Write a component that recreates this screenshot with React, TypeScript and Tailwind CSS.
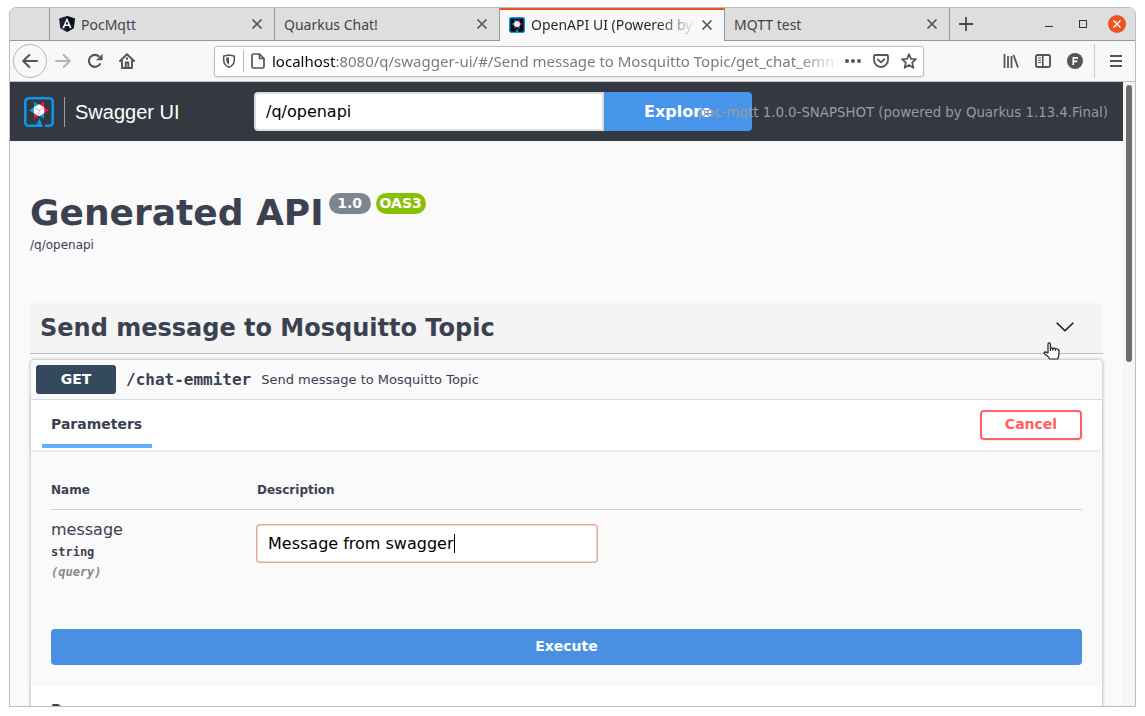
import React from "react";

const CloseX = ({ className = "" }: { className?: string }) => (
  <svg viewBox="0 0 12 12" className={`h-3 w-3 shrink-0 ${className}`} fill="none" stroke="#555" strokeWidth="1.7">
    <path d="M1.5 1.5 10.5 10.5M10.5 1.5 1.5 10.5" />
  </svg>
);

const AngularIcon = () => (
  <svg viewBox="0 0 16 16" className="h-4 w-4 shrink-0">
    <path d="M8 0 15.9 2.6 14.7 12.3 8 16 1.3 12.3.1 2.6Z" fill="#1b2230" />
    <path d="M8 0 15.9 2.6 14.7 12.3 8 16Z" fill="#0b0f18" />
    <path fillRule="evenodd" d="M8 1.8 12.7 12.3H10.9L10 9.9H6L5.1 12.3H3.3ZM8 5 6.6 8.4H9.4Z" fill="#fff" />
  </svg>
);

const QuarkusIcon = ({ dark, className }: { dark?: boolean; className: string }) => (
  <svg viewBox="0 0 30 30" className={`shrink-0 ${className}`}>
    {dark && <rect x="1" y="1" width="28" height="28" rx="3" fill="#050a12" />}
    <path
      d="M12 28.8H4.5A3.2 3.2 0 0 1 1.3 25.5V4.5A3.2 3.2 0 0 1 4.5 1.3H25.5A3.2 3.2 0 0 1 28.7 4.5V25.5A3.2 3.2 0 0 1 25.5 28.8H21"
      fill="none"
      stroke="#0b97ea"
      strokeWidth="2.6"
    />
    <path d="M15.4 21.2 19 30H11.5Z" fill="#0b97ea" />
    <path d="M10 4.8 15.2 8 10 11.2Z" fill="#0b97ea" />
    <path d="M20 4.8 14.8 8 20 11.2Z" fill="#f5134f" />
    <path d="M5 13.3 10.3 10V16.6Z" fill="#0b97ea" />
    <path d="M25 13.3 19.7 10V16.6Z" fill="#f5134f" />
    <path d="M10 21.8V15.4L15.2 18.6Z" fill="#f5134f" />
    <path d="M20 21.8V15.4L14.8 18.6Z" fill="#0b97ea" />
    <path d="M15 7.3 20.2 10.3V16.3L15 19.3 9.8 16.3V10.3Z" fill="#fff" />
    <path d="M10.3 10.7 15 13.3 19.7 10.7M15 13.3V18.6" fill="none" stroke="#9ba6b3" strokeWidth=".8" />
  </svg>
);

const Tab = ({ title, icon }: { title: string; icon?: React.ReactNode }) => (
  <div className="flex h-[33px] w-[225px] items-center border-r border-b border-[#999] bg-[#dedede] pr-[11px] pl-[9px]">
    {icon && <span className="mr-1.5 flex">{icon}</span>}
    <span className="flex-1 whitespace-nowrap">{title}</span>
    <CloseX />
  </div>
);

const TabBar = () => (
  <div className="flex h-[33px] text-[14px] text-[#444]">
    <div className="w-10 border-r border-b border-[#999] bg-[#dedede]" />
    <Tab title="PocMqtt" icon={<AngularIcon />} />
    <Tab title="Quarkus Chat!" />
    <div className="flex h-[33px] w-[225px] items-center border-t-2 border-r border-[#e95420] border-r-[#999] bg-[#f8f8f8] pr-[11px] pb-0.5 pl-[9px]">
      <QuarkusIcon dark className="mr-1.5 h-4 w-4" />
      <span className="w-[164px] overflow-hidden mask-r-from-78% whitespace-nowrap text-[#2a2a2a]">OpenAPI UI (Powered by</span>
      <CloseX className="ml-auto" />
    </div>
    <Tab title="MQTT test" />
    <div className="flex flex-1 items-center border-b border-[#999] bg-[#dedede] pr-[9px] pl-[9px]">
      <svg viewBox="0 0 14 14" className="h-3.5 w-3.5" stroke="#4a4a4a" strokeWidth="1.8">
        <path d="M7 0V14M0 7H14" />
      </svg>
      <div className="ml-auto flex items-center">
        <svg viewBox="0 0 8 12" className="mr-[26px] h-3 w-2" stroke="#333" strokeWidth="1">
          <path d="M0 8.5H8" />
        </svg>
        <svg viewBox="0 0 8 8" className="mr-[21px] h-2 w-2" fill="none" stroke="#333" strokeWidth="1">
          <rect x=".5" y=".5" width="7" height="7" />
        </svg>
        <svg viewBox="0 0 18 18" className="h-[18px] w-[18px]">
          <circle cx="9" cy="9" r="9" fill="#e95420" />
          <path d="M5.5 5.5 12.5 12.5M12.5 5.5 5.5 12.5" stroke="#fff" strokeWidth="1.4" />
        </svg>
      </div>
    </div>
  </div>
);

const icon = "h-4 w-4 shrink-0";

const Toolbar = () => (
  <div className="flex h-[41px] items-center border-b border-[#c4c4c4] bg-[#f8f8f8] pl-[3px] text-[#555]">
    <div className="flex h-[34px] w-[34px] items-center justify-center rounded-full border border-[#b4b4b4]">
      <svg viewBox="0 0 16 16" className={icon} fill="none" stroke="currentColor" strokeWidth="2" strokeLinecap="round" strokeLinejoin="round">
        <path d="M15 8H1.4M7.3 2 1.2 8 7.3 14" />
      </svg>
    </div>
    <svg viewBox="0 0 16 16" className={`ml-2 text-[#b5b5b5] ${icon}`} fill="none" stroke="currentColor" strokeWidth="2" strokeLinecap="round" strokeLinejoin="round">
      <path d="M1 8H14.6M8.7 2 14.8 8 8.7 14" />
    </svg>
    <svg viewBox="0 0 16 16" className={`ml-4 ${icon}`}>
      <path d="M13.4 10.3A6 6 0 1 1 12.3 3.8" fill="none" stroke="currentColor" strokeWidth="2.1" />
      <path d="M15.6.8V7.2H9.2Z" fill="currentColor" />
    </svg>
    <svg viewBox="0 0 16 16" className={`ml-4 ${icon}`} fill="none" stroke="currentColor" strokeWidth="1.9" strokeLinejoin="round" strokeLinecap="round">
      <path d="M1 8 8 1.2 15 8M3 7.5V15H13V7.5" />
      <path d="M6.7 15V9.5H9.3V15" />
      <path d="M8 5V6" />
    </svg>
    <div className="ml-[79px] flex h-[31px] w-[710px] items-center rounded-[3px] border border-[#bdbdbd] bg-white pl-[7px] shadow-[0_1px_2px_rgba(0,0,0,0.08)]">
      <svg viewBox="0 0 14 14" className="h-3.5 w-3.5 shrink-0">
        <path d="M7 .9 12.3 2V6C12.3 9.4 10.3 11.9 7 13.2 3.7 11.9 1.7 9.4 1.7 6V2Z" fill="none" stroke="currentColor" strokeWidth="1.5" />
        <path d="M7 3.2V10.7C5.2 9.8 4.2 8 4.2 6V3.8Z" fill="currentColor" />
      </svg>
      <span className="ml-[7px] h-[22px] w-px bg-[#bbb]" />
      <svg viewBox="0 0 14 16" className="ml-[7px] h-4 w-3.5 shrink-0" fill="none" stroke="currentColor" strokeWidth="1.7" strokeLinejoin="round">
        <path d="M1 2.5Q1 1 2.5 1H8.5L13 5.5V13.5Q13 15 11.5 15H2.5Q1 15 1 13.5ZM8.5 1V5.5H13" />
      </svg>
      <div className="ml-[7px] w-[567px] overflow-hidden mask-r-from-93% text-[15px] whitespace-nowrap text-[#7b7b7b]">
        <span className="text-[#080808]">localhost</span>:8080/q/swagger-ui/#/Send message to Mosquitto Topic/get_chat_emm
      </div>
      <svg viewBox="0 0 16 16" className={`ml-1.5 ${icon}`} fill="currentColor">
        <circle cx="2" cy="8" r="2" />
        <circle cx="8" cy="8" r="2" />
        <circle cx="14" cy="8" r="2" />
      </svg>
      <svg viewBox="0 0 16 14" className="ml-3 h-3.5 w-4 shrink-0" fill="none" stroke="currentColor" strokeWidth="1.8" strokeLinecap="round" strokeLinejoin="round">
        <path d="M2 1H14Q15 1 15 2V6A7 7 0 0 1 1 6V2Q1 1 2 1Z" />
        <path d="M4.8 5.3 8 8.4 11.2 5.3" />
      </svg>
      <svg viewBox="0 0 16 16" className={`ml-3 ${icon}`} fill="none" stroke="currentColor" strokeWidth="1.7" strokeLinejoin="round">
        <path d="M8 1.2 10 5.8 15 6.2 11.2 9.5 12.4 14.8 8 12 3.6 14.8 4.8 9.5 1 6.2 6 5.8Z" />
      </svg>
    </div>
    <svg viewBox="0 0 16 14" className="ml-[79px] h-3.5 w-4 shrink-0" fill="none" stroke="currentColor" strokeWidth="1.8">
      <path d="M1.5 0V14M5 2V14M8.5 2V14M10.5 1 15 13.5" />
    </svg>
    <svg viewBox="0 0 16 14" className="ml-4 h-3.5 w-4 shrink-0" fill="none" stroke="currentColor">
      <rect x="1" y="1" width="14" height="12" rx="1.5" strokeWidth="1.9" />
      <path d="M7.8 1V13" strokeWidth="1.6" />
      <path d="M3 4H6.2M3 6.3H6.2M3 8.6H6.2" strokeWidth="1" />
    </svg>
    <svg viewBox="0 0 16 16" className={`ml-4 ${icon}`}>
      <circle cx="8" cy="8" r="8" fill="currentColor" />
      <path d="M6.3 12V4.8H11M6.3 8.3H10.3" fill="none" stroke="#fff" strokeWidth="1.7" />
    </svg>
    <span className="ml-[11px] h-[34px] w-px bg-[#ccc]" />
    <svg viewBox="0 0 12 12" className="ml-[15px] h-3 w-3 shrink-0" stroke="currentColor" strokeWidth="2">
      <path d="M0 1H12M0 6H12M0 11H12" />
    </svg>
  </div>
);

const Header = () => (
  <div className="relative flex h-[59px] items-center bg-[#343840] pl-3.5">
    <QuarkusIcon className="h-[30px] w-[30px]" />
    <span className="ml-2.5 h-[30px] w-px bg-[#9a9ca0]" />
    <span className="ml-[10px] w-[179px] font-['Liberation_Sans',sans-serif] text-[20px] text-white">Swagger UI</span>
    <div className="flex h-[39px] w-[350px] items-center rounded-l-[4px] border-2 border-[#d8dde2] bg-white pl-2.5 text-[16px] text-black">
      /q/openapi
    </div>
    <div className="flex h-[39px] w-[148px] items-center justify-center rounded-r-[4px] bg-[#4795eb] text-[16px] font-bold text-white">
      Explore
    </div>
    <span className="absolute top-5 right-[15px] text-[13.33px] leading-[22px] whitespace-nowrap text-[#999b9d]">
      poc-mqtt 1.0.0-SNAPSHOT (powered by Quarkus 1.13.4.Final)
    </span>
  </div>
);

const Operation = () => (
  <div className="mt-[5px] h-[360px] rounded-t-[4px] border border-[#d5dade] shadow-[0_0_3px_rgba(0,0,0,0.25)]">
    <div className="flex h-[40px] items-center border-b border-[#d5dadd] pl-[5px]">
      <div className="flex h-[29px] w-20 items-center justify-center rounded-[3px] bg-[#34495e] text-[14px] font-bold text-white">GET</div>
      <span className="ml-2.5 font-['DejaVu_Sans_Mono',monospace] text-[16px] font-bold">/chat-emmiter</span>
      <span className="ml-2.5 text-[13px]">Send message to Mosquitto Topic</span>
    </div>
    <div className="flex h-[50px] items-center justify-between bg-white pr-5 pl-[11px] shadow-[0_1px_2px_rgba(0,0,0,0.1)]">
      <div className="mt-[-2px] h-[48px] w-[110px] border-b-4 border-[#61affe] pl-[9px] text-[14px] leading-[48px] font-bold">Parameters</div>
      <div className="flex h-[30px] w-[102px] items-center justify-center rounded-[4px] border-2 border-[#ff6060] pb-0.5 text-[14px] font-bold text-[#ff6060] shadow-[0_1px_2px_rgba(0,0,0,0.1)]">
        Cancel
      </div>
    </div>
    <div className="px-5 pt-[30px]">
      <div className="grid h-[30px] grid-cols-[206px_1fr] border-b border-[#d0d3d6] text-[12px] leading-[20px] font-bold">
        <span>Name</span>
        <span>Description</span>
      </div>
      <div className="grid h-[119px] grid-cols-[205px_1fr]">
        <div className="pt-[9px]">
          <div className="text-[16px] leading-[22px]">message</div>
          <div className="font-['DejaVu_Sans_Mono',monospace] text-[12px] leading-[22px] font-bold">string</div>
          <div className="font-['DejaVu_Sans_Mono',monospace] text-[12px] leading-[18px] font-bold text-[#888] italic">(query)</div>
        </div>
        <div className="mt-3.5 flex h-[39px] w-[342px] rounded-[4px] bg-[#f3a58b] p-px">
          <div className="flex flex-1 items-center rounded-[3px] border border-[#d9dcde] bg-white pl-2.5 text-[16px] text-black">
            Message from swagger
            <span className="h-[19px] w-px bg-black" />
          </div>
        </div>
      </div>
      <div className="flex h-9 items-center justify-center rounded-[4px] bg-[#4990e2] pb-0.5 text-[14px] font-bold text-white">Execute</div>
    </div>
    <div className="mt-5 h-[50px] bg-white pl-5 text-[14px] leading-[48px] font-bold shadow-[0_0_1px_rgba(0,0,0,0.1)]">Responses</div>
  </div>
);

const Cursor = () => (
  <svg viewBox="0 0 18 18" className="absolute top-[334px] left-[1033px] h-[18px] w-[18px]">
    <path
      d="M5 11V2Q5 .8 6.2 .8T7.4 2V7Q7.5 5.8 8.7 5.9T9.9 7Q10.2 6 11.3 6.2T12.4 7.4Q12.7 6.6 13.8 6.8T16 8.4V12.5L14.8 17H6.8L4.7 14.2 1.5 11.8Q.6 10.7 1.7 10.1T4 10.8Z"
      fill="#fff"
      stroke="#222"
      strokeWidth="1.2"
      strokeLinejoin="round"
    />
    <path d="M7.4 7V9M9.9 7V9M12.4 7.5V9" stroke="#222" strokeWidth="1" />
  </svg>
);

export default function App() {
  return (
    <div className="h-[716px] w-[1145px] overflow-hidden bg-white pt-[7px] pl-[9px]">
      <div className="relative h-[700px] w-[1127px] overflow-hidden rounded-t-[7px] border border-[#bdbdbd] bg-[#fafafa] font-['Noto_Sans',sans-serif]">
        <TabBar />
        <Toolbar />
        <div className="flex h-[624px] overflow-hidden font-['DejaVu_Sans',sans-serif] text-[#3b4151]">
          <div className="w-[1113px] shrink-0">
            <Header />
            <div className="px-5 pt-[48px]">
              <div className="flex h-[46px] items-start">
                <h1 className="text-[36px] leading-[48px] font-bold whitespace-nowrap">Generated API</h1>
                <span className="mt-1 ml-[5px] flex h-[21px] w-[42px] items-center justify-center rounded-full bg-[#7d8492] text-[14px] font-bold text-white">1.0</span>
                <span className="mt-1 ml-[5px] flex h-[21px] w-[50px] items-center justify-center rounded-full bg-[#89bf04] text-[14px] font-bold text-white">OAS3</span>
              </div>
              <div className="h-[68px] text-[12px] leading-[20px]">/q/openapi</div>
              <div className="flex h-[51px] w-[1073px] items-center justify-between border-b border-[#bbbcbf] bg-[#f4f4f4] pr-[29px] pl-2.5">
                <h2 className="text-[24px] font-bold">Send message to Mosquitto Topic</h2>
                <svg viewBox="0 0 18 10" className="-mt-0.5 h-2.5 w-[18px]" fill="none" stroke="#111" strokeWidth="1.5">
                  <path d="M.7.7 9 8.7 17.3.7" />
                </svg>
              </div>
              <Operation />
            </div>
          </div>
          <div className="w-3 bg-[#f5f5f5] pt-[3px] pl-[3px]">
            <div className="h-[277px] w-1.5 rounded-full bg-[#6d6d6d]" />
          </div>
        </div>
        <Cursor />
      </div>
    </div>
  );
}
